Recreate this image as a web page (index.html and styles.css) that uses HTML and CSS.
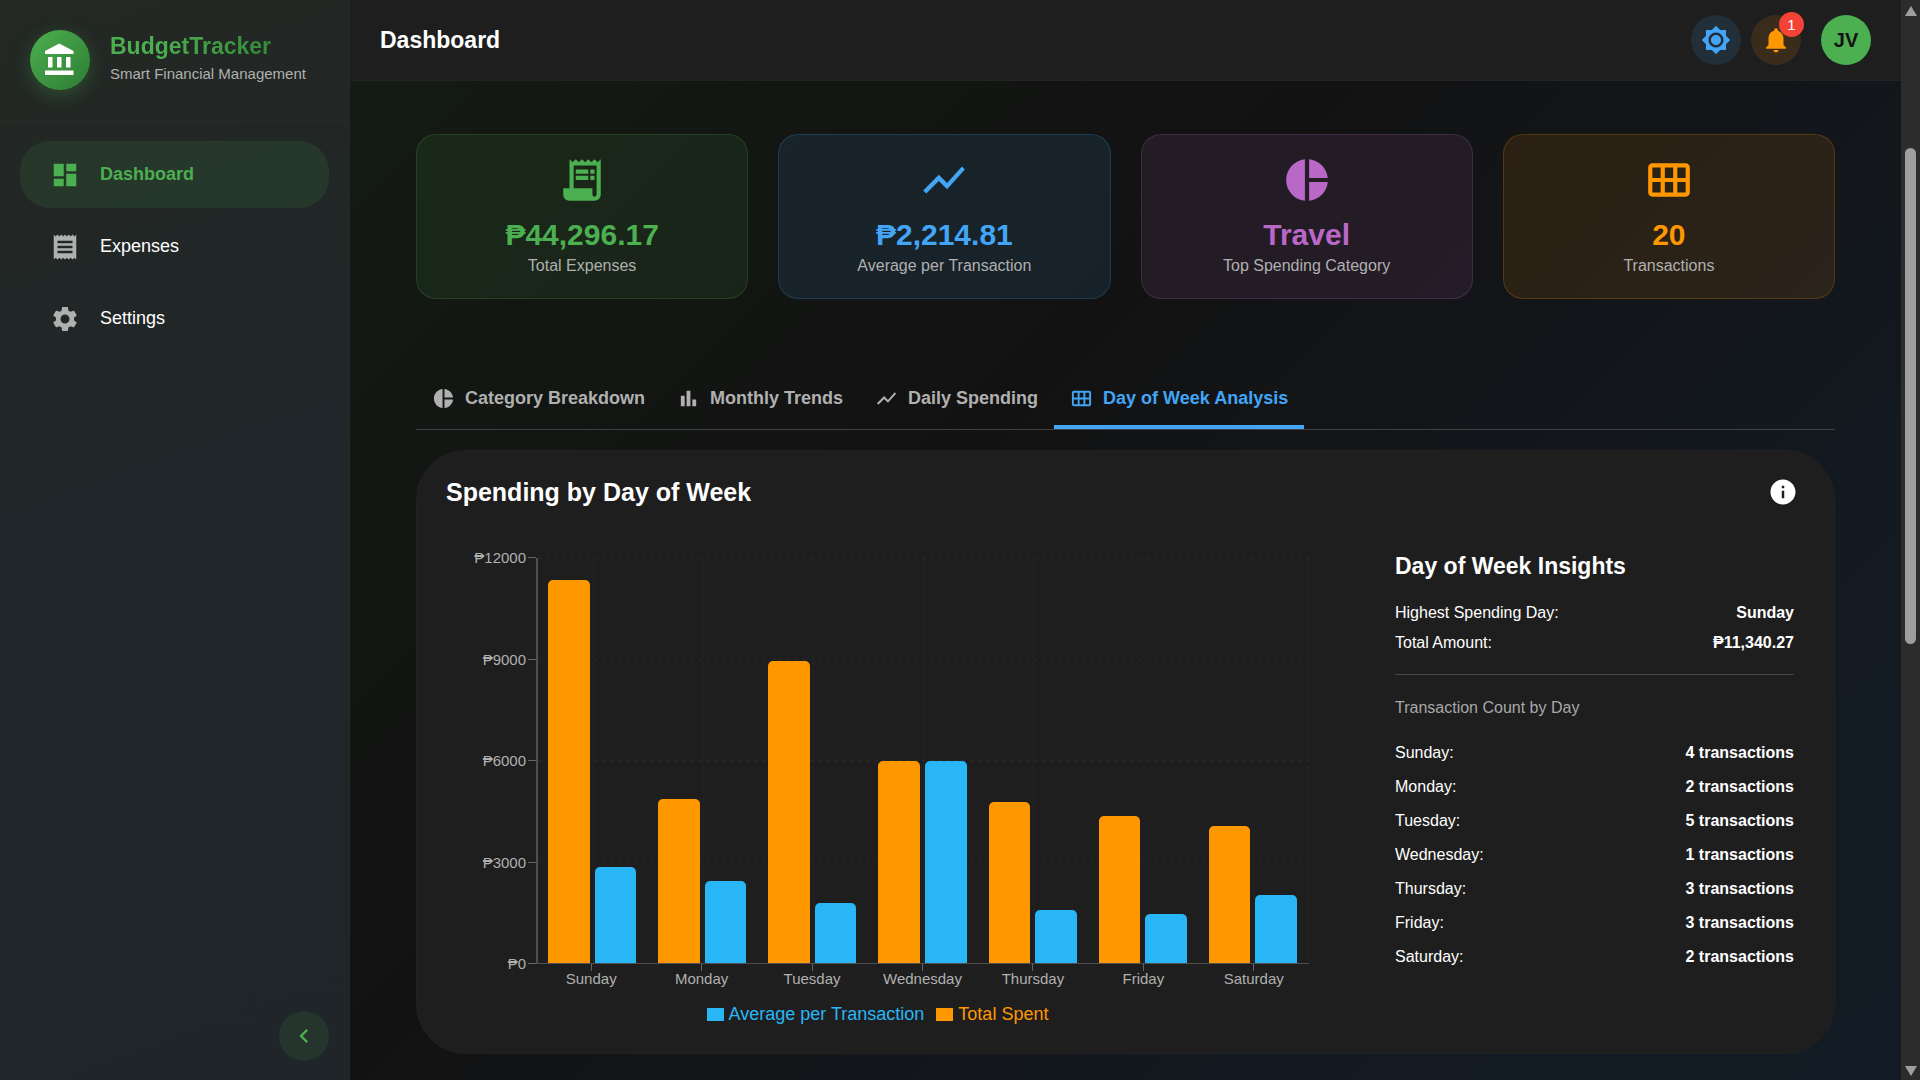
FILE: index.html
```html
<!DOCTYPE html>
<html lang="en">
<head>
<meta charset="utf-8">
<meta name="viewport" content="width=device-width, initial-scale=1">
<title>BudgetTracker – Dashboard</title>
<link rel="stylesheet" href="styles.css">
</head>
<body>
<svg class="sprite" aria-hidden="true">
  <symbol id="i-bank" viewBox="0 0 24 24"><path d="M4 10v7h3v-7zm6 0v7h3v-7zM2 22h19v-3H2zm14-12v7h3v-7zm-4.500-9L2 6v2h19V6z"/></symbol>
  <symbol id="i-dashboard" viewBox="0 0 24 24"><path d="M3 13h8V3H3v10zm0 8h8v-6H3v6zm10 0h8V11h-8v10zm0-18v6h8V3h-8z"/></symbol>
  <symbol id="i-receipt" viewBox="0 0 24 24"><path d="M18 17H6v-2h12v2zm0-4H6v-2h12v2zm0-4H6V7h12v2zM3 22l1.5-1.5L6 22l1.5-1.5L9 22l1.5-1.5L12 22l1.5-1.5L15 22l1.5-1.5L18 22l1.5-1.5L21 22V2l-1.5 1.5L18 2l-1.5 1.5L15 2l-1.5 1.5L12 2l-1.5 1.5L9 2 7.5 3.5 6 2 4.5 3.5 3 2v20z"/></symbol>
  <symbol id="i-settings" viewBox="0 0 24 24"><path d="M19.14 12.94c.04-.3.06-.61.06-.94 0-.32-.02-.64-.07-.94l2.03-1.58c.18-.14.23-.41.12-.61l-1.92-3.32c-.12-.22-.37-.29-.59-.22l-2.39.96c-.5-.38-1.03-.7-1.62-.94l-.36-2.54c-.04-.24-.24-.41-.48-.41h-3.84c-.24 0-.43.17-.47.41l-.36 2.54c-.59.24-1.13.57-1.62.94l-2.39-.96c-.22-.08-.47 0-.59.22L2.74 8.87c-.12.21-.08.47.12.61l2.03 1.58c-.05.3-.09.63-.09.94s.02.64.07.94l-2.03 1.58c-.18.14-.23.41-.12.61l1.920 3.320c.12.22.37.29.59.22l2.39-.96c.5.38 1.030.7 1.620.94l.36 2.54c.05.24.24.41.48.41h3.840c.24 0 .44-.17.47-.41l.36-2.540c.59-.24 1.130-.56 1.620-.94l2.390.96c.22.08.47 0 .59-.22l1.920-3.320c.12-.22.07-.47-.12-.61l-2.010-1.580zM12 15.600c-1.980 0-3.600-1.620-3.600-3.600s1.620-3.600 3.600-3.600 3.600 1.620 3.600 3.600-1.620 3.600-3.600 3.600z"/></symbol>
  <symbol id="i-left" viewBox="0 0 24 24"><path d="M15.410 7.410 14 6l-6 6 6 6 1.410-1.410L10.830 12z"/></symbol>
  <symbol id="i-sun" viewBox="0 0 24 24"><path d="M20 8.690V4h-4.690L12 .69 8.690 4H4v4.690L.69 12 4 15.310V20h4.690L12 23.310 15.310 20H20v-4.690L23.310 12 20 8.690zM12 18c-3.310 0-6-2.690-6-6s2.690-6 6-6 6 2.690 6 6-2.690 6-6 6zm0-10c-2.210 0-4 1.790-4 4s1.790 4 4 4 4-1.790 4-4-1.790-4-4-4z"/></symbol>
  <symbol id="i-bell" viewBox="0 0 24 24"><path d="M12 22c1.100 0 2-.9 2-2h-4c0 1.100.89 2 2 2zm6-6v-5c0-3.070-1.640-5.640-4.500-6.320V4c0-.83-.67-1.500-1.500-1.500s-1.500.67-1.500 1.500v.68C7.630 5.360 6 7.920 6 11v5l-2 2v1h16v-1l-2-2z"/></symbol>
  <symbol id="i-receipt-long" viewBox="0 0 24 24"><path d="M19.500 3.500 18 2l-1.500 1.500L15 2l-1.500 1.500L12 2l-1.500 1.500L9 2 7.500 3.500 6 2v14H3v3c0 1.660 1.340 3 3 3h12c1.660 0 3-1.340 3-3V2l-1.500 1.500zM19 19c0 .55-.45 1-1 1s-1-.45-1-1v-3H8V5h11v14z"/><path d="M9 7h6v2H9zm7 0h2v2h-2zm-7 3h6v2H9zm7 0h2v2h-2z"/></symbol>
  <symbol id="i-line" viewBox="0 0 24 24"><path d="m3.500 18.490 6-6.010 4 4L22 6.920l-1.410-1.410-7.090 7.970-4-4L2 16.990z"/></symbol>
  <symbol id="i-pie" viewBox="0 0 24 24"><path d="M11 2v20c-5.070-.5-9-4.790-9-10s3.930-9.500 9-10zm2.030 0v8.990H22c-.47-4.740-4.240-8.520-8.970-8.990zm0 11.010V22c4.740-.47 8.500-4.250 8.970-8.990h-8.970z"/></symbol>
  <symbol id="i-grid" viewBox="0 0 24 24"><path d="M20 4H4c-1.100 0-2 .9-2 2v12c0 1.100.9 2 2 2h16c1.100 0 2-.9 2-2V6c0-1.100-.9-2-2-2zM8 11H4V6h4v5zm6 0h-4V6h4v5zm6 0h-4V6h4v5zM8 18H4v-5h4v5zm6 0h-4v-5h4v5zm6 0h-4v-5h4v5z"/></symbol>
  <symbol id="i-bars" viewBox="0 0 24 24"><path d="M4 9h4v11H4zm12 4h4v7h-4zm-6-9h4v16h-4z"/></symbol>
  <symbol id="i-info" viewBox="0 0 24 24"><path d="M12 2C6.480 2 2 6.480 2 12s4.480 10 10 10 10-4.480 10-10S17.520 2 12 2zm1 15h-2v-6h2v6zm0-8h-2V7h2v2z"/></symbol>
</svg>

<div class="app">
  <aside class="sidebar">
    <div class="brand">
      <span class="brand-logo"><svg><use href="#i-bank"/></svg></span>
      <div class="brand-text">
        <div class="brand-name">BudgetTracker</div>
        <div class="brand-sub">Smart Financial Management</div>
      </div>
    </div>
    <nav class="nav">
      <a class="nav-item active" href="#dashboard"><svg><use href="#i-dashboard"/></svg>Dashboard</a>
      <a class="nav-item" href="#expenses"><svg><use href="#i-receipt"/></svg>Expenses</a>
      <a class="nav-item" href="#settings"><svg><use href="#i-settings"/></svg>Settings</a>
    </nav>
    <div class="sidebar-foot">
      <button class="round green" type="button" aria-label="Collapse sidebar"><svg class="chevron"><use href="#i-left"/></svg></button>
    </div>
  </aside>

  <div class="page">
    <header class="topbar">
      <h1>Dashboard</h1>
      <div class="actions">
        <button class="round blue" type="button" aria-label="Toggle theme"><svg><use href="#i-sun"/></svg></button>
        <button class="round orange" type="button" aria-label="Notifications"><svg><use href="#i-bell"/></svg><span class="badge">1</span></button>
        <button class="round avatar" type="button" aria-label="Account">JV</button>
      </div>
    </header>

    <main class="main">
      <section class="stats">
        <article class="stat stat-green"><svg><use href="#i-receipt-long"/></svg><div class="stat-value">₱44,296.17</div><div class="stat-label">Total Expenses</div></article>
        <article class="stat stat-blue"><svg><use href="#i-line"/></svg><div class="stat-value">₱2,214.81</div><div class="stat-label">Average per Transaction</div></article>
        <article class="stat stat-purple"><svg><use href="#i-pie"/></svg><div class="stat-value">Travel</div><div class="stat-label">Top Spending Category</div></article>
        <article class="stat stat-orange"><svg><use href="#i-grid"/></svg><div class="stat-value">20</div><div class="stat-label">Transactions</div></article>
      </section>

      <div class="tabs" role="tablist">
        <button class="tab" type="button" role="tab" aria-selected="false"><svg><use href="#i-pie"/></svg>Category Breakdown</button>
        <button class="tab" type="button" role="tab" aria-selected="false"><svg><use href="#i-bars"/></svg>Monthly Trends</button>
        <button class="tab" type="button" role="tab" aria-selected="false"><svg><use href="#i-line"/></svg>Daily Spending</button>
        <button class="tab selected" type="button" role="tab" aria-selected="true"><svg><use href="#i-grid"/></svg>Day of Week Analysis</button>
      </div>

      <section class="panel">
        <div class="panel-head">
          <h2>Spending by Day of Week</h2>
          <button class="info" type="button" aria-label="About this chart"><svg><use href="#i-info"/></svg></button>
        </div>
        <div class="panel-body">
          <div class="chart">
            <div class="y-axis">
              <span>₱12000</span><span>₱9000</span><span>₱6000</span><span>₱3000</span><span>₱0</span>
            </div>
            <div class="plot">
              <svg class="gridlines" aria-hidden="true">
                <line x1="0" y1="0" x2="100%" y2="0"/>
                <line x1="0" y1="25%" x2="100%" y2="25%"/>
                <line x1="0" y1="50%" x2="100%" y2="50%"/>
                <line x1="0" y1="75%" x2="100%" y2="75%"/>
                <line x1="7.143%" y1="0" x2="7.143%" y2="100%"/>
                <line x1="21.429%" y1="0" x2="21.429%" y2="100%"/>
                <line x1="35.714%" y1="0" x2="35.714%" y2="100%"/>
                <line x1="50%" y1="0" x2="50%" y2="100%"/>
                <line x1="64.286%" y1="0" x2="64.286%" y2="100%"/>
                <line x1="78.571%" y1="0" x2="78.571%" y2="100%"/>
                <line x1="92.857%" y1="0" x2="92.857%" y2="100%"/>
                <line x1="100%" y1="0" x2="100%" y2="100%"/>
              </svg>
              <div class="group"><i class="bar total" style="height:94.5%"></i><i class="bar avg" style="height:23.6%"></i></div>
              <div class="group"><i class="bar total" style="height:40.4%"></i><i class="bar avg" style="height:20.2%"></i></div>
              <div class="group"><i class="bar total" style="height:74.6%"></i><i class="bar avg" style="height:14.9%"></i></div>
              <div class="group"><i class="bar total" style="height:50%"></i><i class="bar avg" style="height:50%"></i></div>
              <div class="group"><i class="bar total" style="height:39.7%"></i><i class="bar avg" style="height:13.2%"></i></div>
              <div class="group"><i class="bar total" style="height:36.4%"></i><i class="bar avg" style="height:12.1%"></i></div>
              <div class="group"><i class="bar total" style="height:33.8%"></i><i class="bar avg" style="height:16.9%"></i></div>
            </div>
            <div class="x-axis">
              <span>Sunday</span><span>Monday</span><span>Tuesday</span><span>Wednesday</span><span>Thursday</span><span>Friday</span><span>Saturday</span>
            </div>
            <div class="legend">
              <span class="key key-avg">Average per Transaction</span>
              <span class="key key-total">Total Spent</span>
            </div>
          </div>

          <div class="insights">
            <h3>Day of Week Insights</h3>
            <dl class="summary">
              <div><dt>Highest Spending Day:</dt><dd>Sunday</dd></div>
              <div><dt>Total Amount:</dt><dd>₱11,340.27</dd></div>
            </dl>
            <h4>Transaction Count by Day</h4>
            <dl class="counts">
              <div><dt>Sunday:</dt><dd>4 transactions</dd></div>
              <div><dt>Monday:</dt><dd>2 transactions</dd></div>
              <div><dt>Tuesday:</dt><dd>5 transactions</dd></div>
              <div><dt>Wednesday:</dt><dd>1 transactions</dd></div>
              <div><dt>Thursday:</dt><dd>3 transactions</dd></div>
              <div><dt>Friday:</dt><dd>3 transactions</dd></div>
              <div><dt>Saturday:</dt><dd>2 transactions</dd></div>
            </dl>
          </div>
        </div>
      </section>
    </main>
  </div>

  <div class="scrollbar" aria-hidden="true">
    <span class="arrow up"></span>
    <span class="track"><span class="thumb"></span></span>
    <span class="arrow down"></span>
  </div>
</div>
</body>
</html>
```
FILE: styles.css
```css
* { box-sizing: border-box; }

:root {
  --green: #4caf50;
  --blue: #42a5f5;
  --purple: #ba68c8;
  --orange: #ff9800;
  --sky: #29b6f6;
  --muted: #b0b0b0;
  --surface: #1e1e1e;
  --hairline: rgba(255, 255, 255, 0.02);
}

body {
  margin: 0;
  background: #121212;
  color: #fff;
  font-family: "Liberation Sans", Arial, sans-serif;
  font-size: 16px;
}

h1, h2, h3, h4, dl, dd { margin: 0; }
button { font: inherit; border: 0; padding: 0; cursor: pointer; }
svg { fill: currentColor; flex: none; }
.sprite { display: none; }

.app {
  display: flex;
  min-height: 100vh;
}

/* Sidebar */
.sidebar {
  display: flex;
  flex-direction: column;
  flex: none;
  width: 350px;
  border-right: 1px solid #262a29;
  background: linear-gradient(160deg, #232823 0%, #20262a 50%, #202529 100%);
}

.brand {
  display: flex;
  align-items: center;
  gap: 20px;
  height: 121px;
  padding: 0 30px;
  border-bottom: 1px solid var(--hairline);
}

.brand-logo {
  display: grid;
  place-items: center;
  width: 60px;
  height: 60px;
  border-radius: 50%;
  background: linear-gradient(135deg, #4caf50, #2e7d32);
  box-shadow: 0 5px 18px rgba(76, 175, 80, 0.3);
}

.brand-logo svg { width: 36px; height: 36px; }
.brand-text { padding-bottom: 4px; }

.brand-name {
  width: fit-content;
  font-size: 23px;
  line-height: 30px;
  font-weight: 700;
  color: transparent;
  background: linear-gradient(90deg, #4caf50 30%, #2e7d32 120%);
  background-clip: text;
}

.brand-sub {
  font-size: 15px;
  line-height: 25px;
  color: var(--muted);
}

.nav {
  display: flex;
  flex-direction: column;
  gap: 5px;
  padding: 20px;
}

.nav-item {
  display: flex;
  align-items: center;
  gap: 20px;
  height: 67px;
  padding: 0 30px;
  border-radius: 30px;
  color: #fff;
  font-size: 18px;
  text-decoration: none;
}

.nav-item svg { width: 30px; height: 30px; color: var(--muted); }
.nav-item.active { background: rgba(76, 175, 80, 0.12); color: var(--green); font-weight: 700; }
.nav-item.active svg { color: var(--green); }

.sidebar-foot {
  display: flex;
  justify-content: flex-end;
  margin-top: auto;
  padding: 20px;
  border-top: 1px solid var(--hairline);
}

.round {
  position: relative;
  display: grid;
  place-items: center;
  width: 50px;
  height: 50px;
  border-radius: 50%;
}

.round svg { width: 30px; height: 30px; }
.round .chevron { width: 28px; height: 28px; }
.round.green { background: rgba(76, 175, 80, 0.12); color: var(--green); }
.round.blue { background: rgba(66, 165, 245, 0.12); color: var(--blue); }
.round.orange { background: rgba(255, 152, 0, 0.12); color: var(--orange); }

.round.avatar {
  margin-left: 10px;
  background: var(--green);
  color: #121212;
  font-size: 20px;
  font-weight: 700;
}

.badge {
  position: absolute;
  top: -3px;
  right: -3px;
  width: 25px;
  border-radius: 13px;
  background: #f44336;
  color: #fff;
  font-size: 15px;
  line-height: 25px;
  text-align: center;
}

/* Page */
.page {
  flex: 1;
  min-width: 0;
  background: linear-gradient(135deg, #141b14 0%, #121212 40%, #131a22 80%, #131c26 100%);
}

.topbar {
  display: flex;
  align-items: center;
  justify-content: space-between;
  height: 81px;
  padding: 0 30px;
  background: var(--surface);
  border-bottom: 1px solid #232323;
}

.topbar h1 { font-size: 23px; line-height: 30px; }
.actions { display: flex; gap: 10px; }

.main { padding: 53px 66px 27px; }

.stats {
  display: grid;
  grid-template-columns: repeat(4, 1fr);
  gap: 30px;
}

.stat {
  display: flex;
  flex-direction: column;
  align-items: center;
  padding: 20px 20px 22px;
  border: 1px solid;
  border-radius: 20px;
}

.stat svg { width: 50px; height: 50px; margin-bottom: 10px; }
.stat-value { font-size: 30px; line-height: 40px; font-weight: 700; }
.stat-label { line-height: 21px; color: var(--muted); }
.stat-green { color: var(--green); background: rgba(76, 175, 80, 0.1); border-color: rgba(76, 175, 80, 0.2); }
.stat-blue { color: var(--blue); background: rgba(66, 165, 245, 0.1); border-color: rgba(66, 165, 245, 0.2); }
.stat-purple { color: var(--purple); background: rgba(186, 104, 200, 0.1); border-color: rgba(186, 104, 200, 0.2); }
.stat-orange { color: var(--orange); background: rgba(255, 152, 0, 0.1); border-color: rgba(255, 152, 0, 0.2); }

/* Tabs */
.tabs {
  display: flex;
  margin: 70px 0 20px;
  border-bottom: 1px solid #404142;
}

.tab {
  display: flex;
  align-items: center;
  gap: 10px;
  height: 60px;
  padding: 2px 16px 0;
  border-bottom: 4px solid transparent;
  background: none;
  color: var(--muted);
  font-size: 18px;
  font-weight: 700;
}

.tab svg { width: 23px; height: 23px; }
.tab.selected { color: var(--blue); border-color: var(--blue); }

/* Panel */
.panel {
  padding: 19px 29px 29px;
  border: 1px solid #222;
  border-radius: 50px;
  background: var(--surface);
}

.panel-head {
  display: flex;
  align-items: center;
  justify-content: space-between;
}

.panel-head h2 { font-size: 25px; line-height: 32px; }

.info {
  display: grid;
  place-items: center;
  width: 44px;
  height: 44px;
  background: none;
  color: #fff;
}

.info svg { width: 30px; height: 30px; }

.panel-body {
  display: grid;
  grid-template-columns: minmax(0, 863fr) minmax(0, 399fr);
  gap: 86px;
  padding: 37px 11px 0 0;
}

/* Chart */
.chart {
  display: grid;
  grid-template-columns: 90px 1fr;
  padding-top: 7px;
}

.y-axis {
  display: flex;
  flex-direction: column;
  justify-content: space-between;
  margin: -10px 0;
  color: var(--muted);
  font-size: 15px;
  line-height: 20px;
  text-align: right;
}

.y-axis span::after {
  content: "";
  display: inline-block;
  width: 8px;
  height: 1px;
  margin-left: 2px;
  background: #666;
  vertical-align: 5px;
}

.plot {
  position: relative;
  display: grid;
  grid-template-columns: repeat(7, 1fr);
  height: 406px;
  border-left: 2px solid #505050;
  border-bottom: 1px solid #505050;
}

.gridlines {
  position: absolute;
  inset: 0;
  width: 100%;
  height: 100%;
  overflow: visible;
  stroke: #282828;
  stroke-dasharray: 4 4;
}

.group {
  position: relative;
  display: grid;
  grid-template-columns: 1fr 1fr;
  align-items: end;
  gap: 5px;
  padding: 0 12px 0 10px;
}

.bar { border-radius: 5px 5px 0 0; }
.bar.total { background: var(--orange); }
.bar.avg { background: var(--sky); }

.x-axis {
  grid-column: 2;
  display: grid;
  grid-template-columns: repeat(7, 1fr);
  color: var(--muted);
  font-size: 15px;
  line-height: 16px;
  text-align: center;
}

.x-axis span::before {
  content: "";
  display: block;
  width: 1px;
  height: 7px;
  margin: 0 auto;
  background: #666;
}

.legend {
  grid-column: 1 / -1;
  display: flex;
  justify-content: center;
  gap: 12px;
  margin-top: 17px;
  font-size: 18px;
  line-height: 20px;
}

.key { display: flex; align-items: center; gap: 5px; }
.key::before { content: ""; width: 17px; height: 13px; background: currentColor; }
.key-avg { color: var(--sky); }
.key-total { color: var(--orange); }

/* Insights */
.insights h3 {
  margin-bottom: 17px;
  font-size: 23px;
  line-height: 30px;
}

.insights dl div { display: flex; justify-content: space-between; }
.insights dd { font-weight: 700; }

.summary {
  padding-bottom: 16px;
  border-bottom: 1px solid #454545;
  line-height: 30px;
}

.insights h4 {
  margin: 21px 0 16px;
  color: #a8a8a8;
  font-size: 16px;
  font-weight: 400;
  line-height: 24px;
}

.counts { line-height: 34px; }

/* Scroll bar */
.scrollbar {
  display: flex;
  flex-direction: column;
  align-items: center;
  flex: none;
  width: 19px;
  padding: 6px 0 5px;
  background: #2c2c2c;
}

.arrow { border: 6px solid transparent; }
.arrow.up { border-top: 0; border-bottom: 10px solid #9f9f9f; }
.arrow.down { border-bottom: 0; border-top: 10px solid #9f9f9f; }
.track { flex: 1; padding-top: 132px; }
.thumb { display: block; width: 11px; height: 54%; border-radius: 6px; background: #9f9f9f; }
```
